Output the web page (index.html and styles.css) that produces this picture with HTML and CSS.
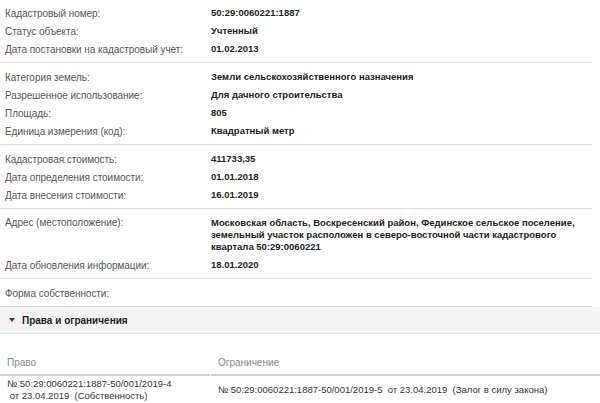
FILE: index.html
```html
<!DOCTYPE html>
<html lang="ru">
<head>
<meta charset="utf-8">
<link rel="stylesheet" href="styles.css">
</head>
<body>
<div class="info">
  <div class="section first">
    <div class="row"><div class="label">Кадастровый номер:</div><div class="value">50:29:0060221:1887</div></div>
    <div class="row"><div class="label">Статус объекта:</div><div class="value">Учтенный</div></div>
    <div class="row"><div class="label">Дата постановки на кадастровый учет:</div><div class="value">01.02.2013</div></div>
  </div>
  <div class="section">
    <div class="row"><div class="label">Категория земель:</div><div class="value">Земли сельскохозяйственного назначения</div></div>
    <div class="row"><div class="label">Разрешенное использование:</div><div class="value">Для дачного строительства</div></div>
    <div class="row"><div class="label">Площадь:</div><div class="value">805</div></div>
    <div class="row"><div class="label">Единица измерения (код):</div><div class="value">Квадратный метр</div></div>
  </div>
  <div class="section">
    <div class="row"><div class="label">Кадастровая стоимость:</div><div class="value">411733,35</div></div>
    <div class="row"><div class="label">Дата определения стоимости:</div><div class="value">01.01.2018</div></div>
    <div class="row"><div class="label">Дата внесения стоимости:</div><div class="value">16.01.2019</div></div>
  </div>
  <div class="section">
    <div class="row multi"><div class="label">Адрес (местоположение):</div><div class="value">Московская область, Воскресенский район, Фединское сельское поселение, земельный участок расположен в северо-восточной части кадастрового квартала 50:29:0060221</div></div>
    <div class="row"><div class="label">Дата обновления информации:</div><div class="value">18.01.2020</div></div>
  </div>
  <div class="section">
    <div class="row"><div class="label">Форма собственности:</div><div class="value"></div></div>
  </div>
</div>
<div class="panel-head"><span class="arrow"></span><span class="panel-title">Права и ограничения</span></div>
<div class="rights">
  <div class="rights-head">
    <div class="col">Право</div>
    <div class="col">Ограничение</div>
  </div>
  <div class="rights-row">
    <div class="col">№ 50:29:0060221:1887-50/001/2019-4<br>&nbsp;от 23.04.2019&nbsp; (Собственность)</div>
    <div class="col">№ 50:29:0060221:1887-50/001/2019-5&nbsp; от 23.04.2019&nbsp; (Залог в силу закона)</div>
  </div>
</div>
</body>
</html>
```
FILE: styles.css
```css
html, body {
  margin: 0;
  padding: 0;
  background: #fff;
}
body {
  font-family: "Liberation Sans", Arial, sans-serif;
  font-size: 10px;
  color: #333;
  width: 600px;
  overflow: hidden;
}
.info {
  width: 592px;
}
.section {
  padding: 5px 0 4px;
  border-bottom: 1px solid #dcdcdc;
}
.section.first {
  padding-top: 4px;
}
.row {
  display: flex;
  min-height: 18px;
  align-items: center;
}
.row.multi {
  align-items: flex-start;
  padding: 3px 0;
}
.label {
  width: 206px;
  padding-left: 5px;
  flex: none;
  color: #555;
  letter-spacing: -0.05px;
}
.value {
  flex: 1;
  font-weight: bold;
  font-size: 9.5px;
  color: #222;
  line-height: 12px;
}
.panel-head {
  display: flex;
  align-items: center;
  height: 26px;
  background: #f4f4f4;
  border-bottom: 1px solid #e4e4e4;
  gap: 7px;
  padding-left: 9px;
}
.arrow {
  width: 0;
  height: 0;
  border-left: 3px solid transparent;
  border-right: 3px solid transparent;
  border-top: 4px solid #8a1c1c;
}
.panel-title {
  font-weight: bold;
  color: #222;
}
.rights {
  padding-top: 17px;
}
.rights-head {
  display: flex;
  color: #888;
  gap: 1px;
}
.rights-head .col {
  border-bottom: 2px solid #cfcfcf;
  height: 25px;
  display: flex;
  align-items: center;
}
.col {
  padding-left: 7px;
  box-sizing: border-box;
}
.col:first-child {
  width: 210px;
  flex: none;
}
.col:last-child {
  flex: 1;
}
.rights-row {
  display: flex;
  align-items: center;
  gap: 1px;
  border-bottom: 1px solid #dcdcdc;
  padding: 2px 0;
  line-height: 12px;
  font-size: 9.5px;
  color: #333;
}
```
